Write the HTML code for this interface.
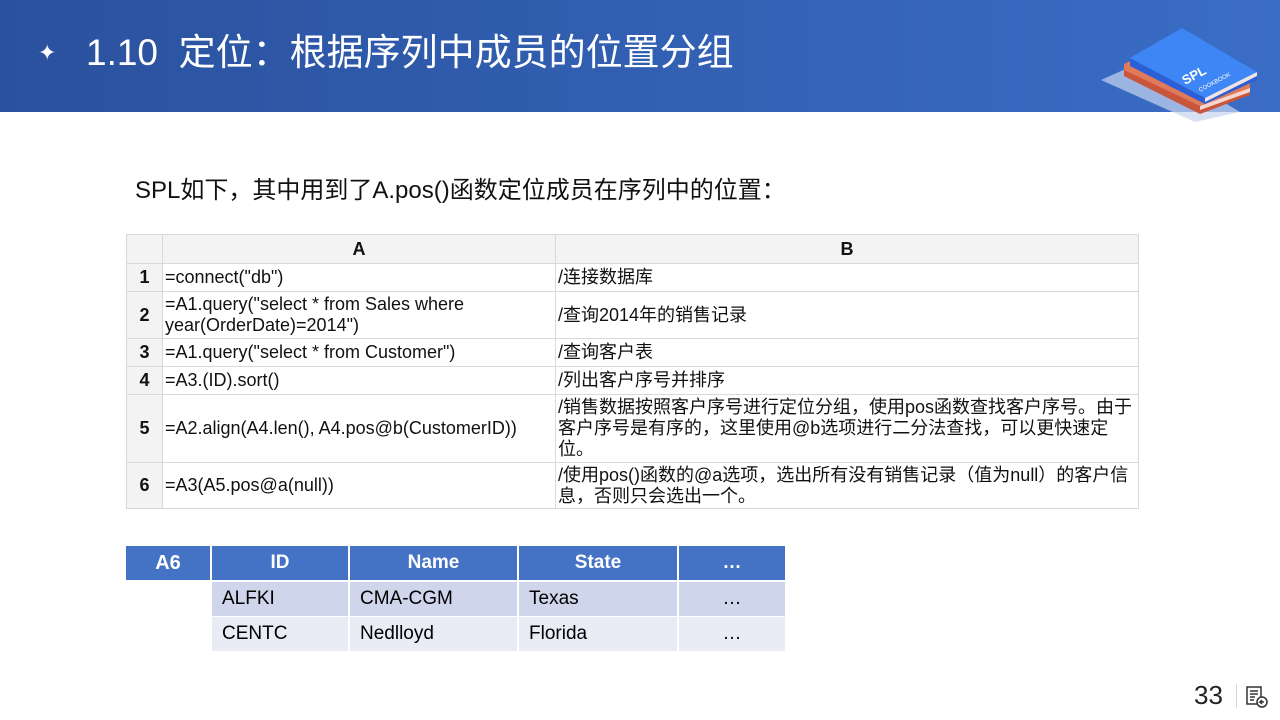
<!DOCTYPE html><html><head><meta charset="utf-8"><style>
body{margin:0;width:1280px;height:720px;position:relative;background:#fff;font-family:"Liberation Sans","Noto Sans CJK SC",sans-serif;overflow:hidden}
.hd{position:absolute;left:0;top:0;width:1280px;height:112px;background:linear-gradient(90deg,#2a519d,#3a6dc6)}
.ttl{position:absolute;left:86px;top:30px;color:#fff;font-size:37px;line-height:46px;font-family:"Liberation Sans","Noto Sans CJK SC",sans-serif}
.star{position:absolute;left:38px;top:40px;color:#fff;font-size:22px}
.sub{position:absolute;left:135px;top:170px;font-size:24px;color:#111}
table.t{position:absolute;left:126px;top:234px;border-collapse:collapse;font-size:18px;color:#111}
table.t td{border:1px solid #d9d9d9;padding:0 2px;line-height:21px;vertical-align:middle}
table.t td.n{background:#f3f3f3;text-align:center;font-weight:bold;width:35px;padding:0}
table.t tr.h td{background:#f3f3f3;text-align:center;font-weight:bold}
.c{position:absolute;font-size:19px;line-height:34px;box-sizing:border-box;padding-left:10px}
</style></head><body>
<div class="hd"></div>
<div class="star">✦</div>
<div class="ttl">1.10&nbsp; 定位：根据序列中成员的位置分组</div>
<svg style="position:absolute;left:1095px;top:10px" width="175" height="115" viewBox="1095 10 175 115">
<polygon points="1101,80 1150,58 1240,112 1195,122" fill="#c8d4f0" opacity="0.7"/>
<polygon points="1124,70 1165,50 1250,88 1250,95 1200,114 1124,76" fill="#c9553a"/>
<polygon points="1124,64 1165,45 1250,80 1250,88 1200,106 1124,70" fill="#e07a5a"/>
<polygon points="1200,106 1250,88 1250,92 1200,110" fill="#f6d6d0"/>
<polygon points="1130,60 1180,30 1257,74 1257,80 1205,104 1130,66" fill="#2c5fd6"/>
<polygon points="1130,58 1182,28 1257,72 1205,98" fill="#3e86f5"/>
<polygon points="1205,98 1257,72 1257,76 1205,102" fill="#f1e4e4"/>
<text x="1185" y="85" fill="#fff" font-size="13" font-weight="bold" transform="rotate(-28 1185 85)">SPL</text>
<text x="1200" y="92" fill="#fff" font-size="6" transform="rotate(-28 1200 92)">COOKBOOK</text>
</svg>
<div class="sub">SPL如下，其中用到了A.pos()函数定位成员在序列中的位置：</div>
<table class="t">
<tr class="h" style="height:29px"><td class="n"></td><td style="width:388px">A</td><td style="width:578px">B</td></tr>
<tr style="height:28px"><td class="n">1</td><td>=connect("db")</td><td>/连接数据库</td></tr>
<tr style="height:47px"><td class="n">2</td><td>=A1.query("select * from Sales where year(OrderDate)=2014")</td><td>/查询2014年的销售记录</td></tr>
<tr style="height:28px"><td class="n">3</td><td>=A1.query("select * from Customer")</td><td>/查询客户表</td></tr>
<tr style="height:28px"><td class="n">4</td><td>=A3.(ID).sort()</td><td>/列出客户序号并排序</td></tr>
<tr style="height:68px"><td class="n">5</td><td style="white-space:nowrap">=A2.align(A4.len(), A4.pos@b(CustomerID))</td><td>/销售数据按照客户序号进行定位分组，使用pos函数查找客户序号。由于客户序号是有序的，这里使用@b选项进行二分法查找，可以更快速定位。</td></tr>
<tr style="height:46px"><td class="n">6</td><td>=A3(A5.pos@a(null))</td><td>/使用pos()函数的@a选项，选出所有没有销售记录（值为null）的客户信息，否则只会选出一个。</td></tr>
</table>
<div class="c" style="left:126px;top:546px;width:84px;background:#4472c4;color:#fff;font-weight:bold;text-align:center;padding:0;font-size:20px">A6</div>
<div class="c" style="left:212px;top:546px;width:136px;background:#4472c4;color:#fff;font-weight:bold;text-align:center;padding:0">ID</div>
<div class="c" style="left:350px;top:546px;width:167px;background:#4472c4;color:#fff;font-weight:bold;text-align:center;padding:0">Name</div>
<div class="c" style="left:519px;top:546px;width:158px;background:#4472c4;color:#fff;font-weight:bold;text-align:center;padding:0">State</div>
<div class="c" style="left:679px;top:546px;width:106px;background:#4472c4;color:#fff;font-weight:bold;text-align:center;padding:0">…</div>
<div class="c" style="left:212px;top:582px;width:136px;background:#cfd5ea">ALFKI</div>
<div class="c" style="left:350px;top:582px;width:167px;background:#cfd5ea">CMA-CGM</div>
<div class="c" style="left:519px;top:582px;width:158px;background:#cfd5ea">Texas</div>
<div class="c" style="left:679px;top:582px;width:106px;background:#cfd5ea;text-align:center;padding:0">…</div>
<div class="c" style="left:212px;top:617px;width:136px;background:#e9ebf5">CENTC</div>
<div class="c" style="left:350px;top:617px;width:167px;background:#e9ebf5">Nedlloyd</div>
<div class="c" style="left:519px;top:617px;width:158px;background:#e9ebf5">Florida</div>
<div class="c" style="left:679px;top:617px;width:106px;background:#e9ebf5;text-align:center;padding:0">…</div>
<div style="position:absolute;left:1194px;top:680px;font-size:26px;color:#222">33</div>
<div style="position:absolute;left:1236px;top:684px;width:1px;height:24px;background:#cdd6ea"></div>
<svg style="position:absolute;left:1245px;top:685px" width="24" height="24" viewBox="0 0 24 24" fill="none" stroke="#333" stroke-width="1.5"><rect x="2" y="2" width="14" height="17"/><path d="M5 6h8M5 9h8M5 12h5M5 15h4"/><circle cx="17" cy="17" r="5" fill="#fff"/><path d="M19 17h-4l2-2M15 17l2 2"/></svg>
</body></html>
